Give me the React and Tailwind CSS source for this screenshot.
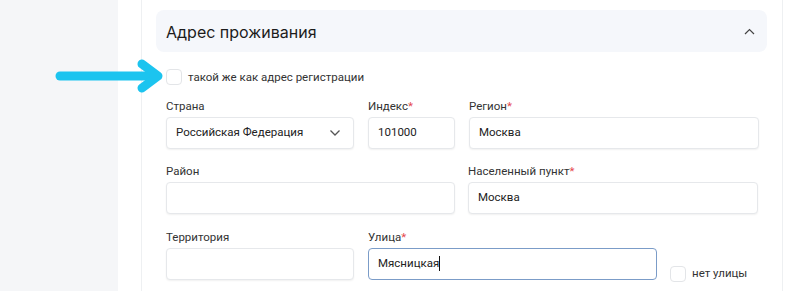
import React from "react";

function Field({ label, req, value, w, focused, chevron }) {
  return (
    <div className="flex flex-col">
      <div className="h-[20px] text-[11.5px] text-[#333] leading-[20px] mb-[1px]">
        {label}
        {req && <span className="text-[#e5484d]">*</span>}
      </div>
      <div
        className={`${w} h-[32px] rounded-[4px] bg-white flex items-center pl-[9px] pr-[10px] text-[11.5px] text-[#222] ${
          focused ? "border border-[#7b9cc8]" : "border border-[#e6e8eb] shadow-[0_1px_2px_rgba(0,0,0,0.06)]"
        }`}
      >
        <span className="flex-1">
          {value}
          {focused && <span className="inline-block w-[1px] h-[15px] bg-[#111] align-middle -mt-[2px]" />}
        </span>
        {chevron && (
          <svg width="12" height="8" viewBox="0 0 12 8" className="mr-[2px]">
            <path d="M1.5 1.5 L6 6 L10.5 1.5" fill="none" stroke="#555" strokeWidth="1.3" />
          </svg>
        )}
      </div>
    </div>
  );
}

export default function App() {
  return (
    <div
      className="w-[800px] h-[291px] overflow-hidden flex bg-white relative"
      style={{ fontFamily: 'Roboto, "Noto Sans", sans-serif' }}
    >
      <div className="w-[118px] bg-[#f5f6f8] shrink-0" />
      <div className="w-[23px] shrink-0" />
      <div className="w-[642px] border-l border-r border-[#eef0f2] shrink-0 pt-[10px] pl-[14px] pr-[15px]">
        <div className="h-[42px] rounded-[8px] bg-[#f5f7fb] flex items-center justify-between pl-[10px] pr-[14px]">
          <span
            className="text-[16px] text-[#1c1c1c] mt-[2px]"
            style={{ fontFamily: 'Inter, "Noto Sans", sans-serif' }}
          >
            Адрес проживания
          </span>
          <svg width="11" height="7" viewBox="0 0 11 7" className="mr-[-2px]">
            <path d="M1 6 L5.5 1.5 L10 6" fill="none" stroke="#444" strokeWidth="1.2" />
          </svg>
        </div>
        <div className="pl-[10px]">
          <div className="flex items-center mt-[17px] h-[16px]">
            <div className="w-[16px] h-[16px] rounded-[4px] border border-[#e3e5e8] bg-white" />
            <span className="ml-[6px] text-[11.5px] text-[#333] mt-[1px]">такой же как адрес регистрации</span>
          </div>
          <div className="flex gap-[14px] mt-[11px]">
            <Field label="Страна" value="Российская Федерация" w="w-[188px]" chevron />
            <Field label="Индекс" req value="101000" w="w-[87px]" />
            <Field label="Регион" req value="Москва" w="w-[290px]" />
          </div>
          <div className="flex gap-[13px] mt-[12px]">
            <Field label="Район" value="" w="w-[289px]" />
            <Field label="Населенный пункт" req value="Москва" w="w-[290px]" />
          </div>
          <div className="flex gap-[14px] mt-[13px] items-start">
            <Field label="Территория" value="" w="w-[188px]" />
            <Field label="Улица" req value="Мясницкая" w="w-[289px]" focused />
            <div className="flex items-center mt-[38px] ml-[-1px]">
              <div className="w-[16px] h-[16px] rounded-[4px] border border-[#e3e5e8] bg-white" />
              <span className="ml-[6px] text-[11.5px] text-[#333]">нет улицы</span>
            </div>
          </div>
        </div>
      </div>
      <svg className="absolute left-[50px] top-[56px]" width="120" height="40" viewBox="0 0 120 40">
        <path d="M10 20 L98 20" stroke="#1cc4ef" strokeWidth="9" strokeLinecap="round" fill="none" />
        <path d="M92 8 L108 20 L92 32" stroke="#1cc4ef" strokeWidth="9" strokeLinecap="round" strokeLinejoin="round" fill="none" />
      </svg>
    </div>
  );
}
